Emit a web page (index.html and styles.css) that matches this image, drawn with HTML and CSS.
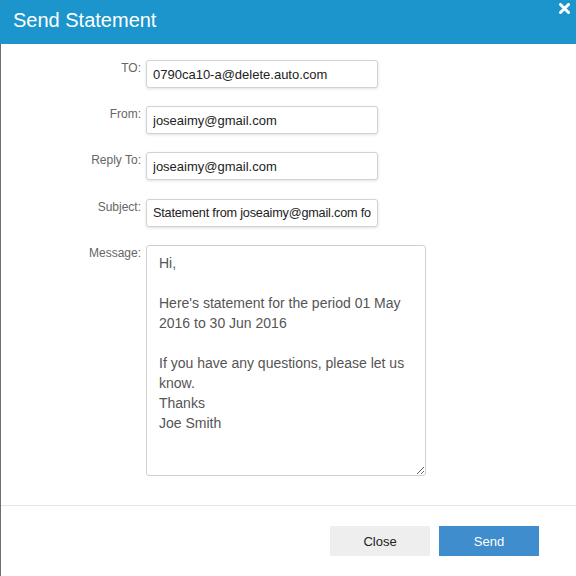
FILE: index.html
```
<!DOCTYPE html>
<html>
<head>
<meta charset="utf-8">
<link rel="stylesheet" href="styles.css">
</head>
<body>
<div class="dialog">
  <div class="header">
    <h1 class="title">Send Statement</h1>
    <svg class="close-x" width="11" height="11" viewBox="0 0 11 11"><path d="M1.5 1.5 L9.5 9.5 M9.5 1.5 L1.5 9.5" stroke="#fff" stroke-width="3" stroke-linecap="round"/></svg>
  </div>
  <div class="body">
    <div class="row">
      <label class="lbl">TO:</label>
      <input class="field" type="text" value="0790ca10-a@delete.auto.com">
    </div>
    <div class="row">
      <label class="lbl">From:</label>
      <input class="field" type="text" value="joseaimy@gmail.com">
    </div>
    <div class="row">
      <label class="lbl">Reply To:</label>
      <input class="field" type="text" value="joseaimy@gmail.com">
    </div>
    <div class="row">
      <label class="lbl">Subject:</label>
      <input class="field subject" type="text" value="Statement from joseaimy@gmail.com for the period">
    </div>
    <div class="row">
      <label class="lbl">Message:</label>
      <textarea class="message">Hi,

Here's statement for the period 01 May 2016 to 30 Jun 2016

If you have any questions, please let us know.
Thanks
Joe Smith</textarea>
    </div>
  </div>
  <div class="footer">
    <button class="btn btn-close">Close</button>
    <button class="btn btn-send">Send</button>
  </div>
</div>
</body>
</html>
```
FILE: styles.css
```
html, body {
  margin: 0;
  padding: 0;
  background: #fff;
}
body {
  font-family: "Liberation Sans", Arial, sans-serif;
  width: 576px;
  height: 576px;
  overflow: hidden;
}
.dialog {
  position: relative;
  height: 576px;
  border-left: 1px solid #6f6f6f;
  box-sizing: border-box;
}
.header {
  position: relative;
  height: 44px;
  background: #1b95cc;
  margin-left: -1px;
  border-top-left-radius: 2px;
}
.title {
  margin: 0;
  padding: 8px 0 0 13px;
  font-size: 20px;
  font-weight: normal;
  color: #fff;
  line-height: 24px;
}
.close-x {
  position: absolute;
  top: 3px;
  right: 6px;
  display: block;
}
.body {
  padding-top: 16px;
  display: flex;
  flex-direction: column;
  gap: 18px;
}
.row {
  display: flex;
  align-items: flex-start;
}
.row:nth-child(4) {
  margin-top: 1px;
}
.lbl {
  width: 140px;
  padding-right: 5px;
  text-align: right;
  font-size: 12px;
  line-height: 14px;
  color: #666;
  padding-top: 1px;
}
.field {
  box-sizing: border-box;
  width: 232px;
  height: 28px;
  margin: 0;
  padding: 0 6px;
  border: 1px solid #d2d2d2;
  border-radius: 3px;
  box-shadow: 0 1px 3px rgba(0,0,0,0.12);
  font-family: "Liberation Sans", Arial, sans-serif;
  font-size: 13px;
  color: #222;
  background: #fff;
  outline: none;
}
.subject {
  font-size: 12.7px;
  letter-spacing: -0.2px;
}
.message {
  box-sizing: border-box;
  width: 280px;
  height: 231px;
  margin: 0;
  padding: 7px 12px;
  border: 1px solid #cfcfcf;
  border-radius: 3px;
  font-family: "Liberation Sans", Arial, sans-serif;
  font-size: 14px;
  line-height: 20px;
  color: #555;
  background: #fff;
  outline: none;
}
.footer {
  position: absolute;
  left: 0;
  right: 0;
  top: 505px;
  border-top: 1px solid #e5e5e5;
  padding: 20px 37px 0 0;
  display: flex;
  justify-content: flex-end;
  gap: 9px;
}
.btn {
  width: 100px;
  height: 30px;
  border: none;
  margin: 0;
  font-family: "Liberation Sans", Arial, sans-serif;
  font-size: 13px;
}
.btn-close {
  background: #eeeeee;
  color: #222;
}
.btn-send {
  background: #3f8dcc;
  color: #fff;
}
```
